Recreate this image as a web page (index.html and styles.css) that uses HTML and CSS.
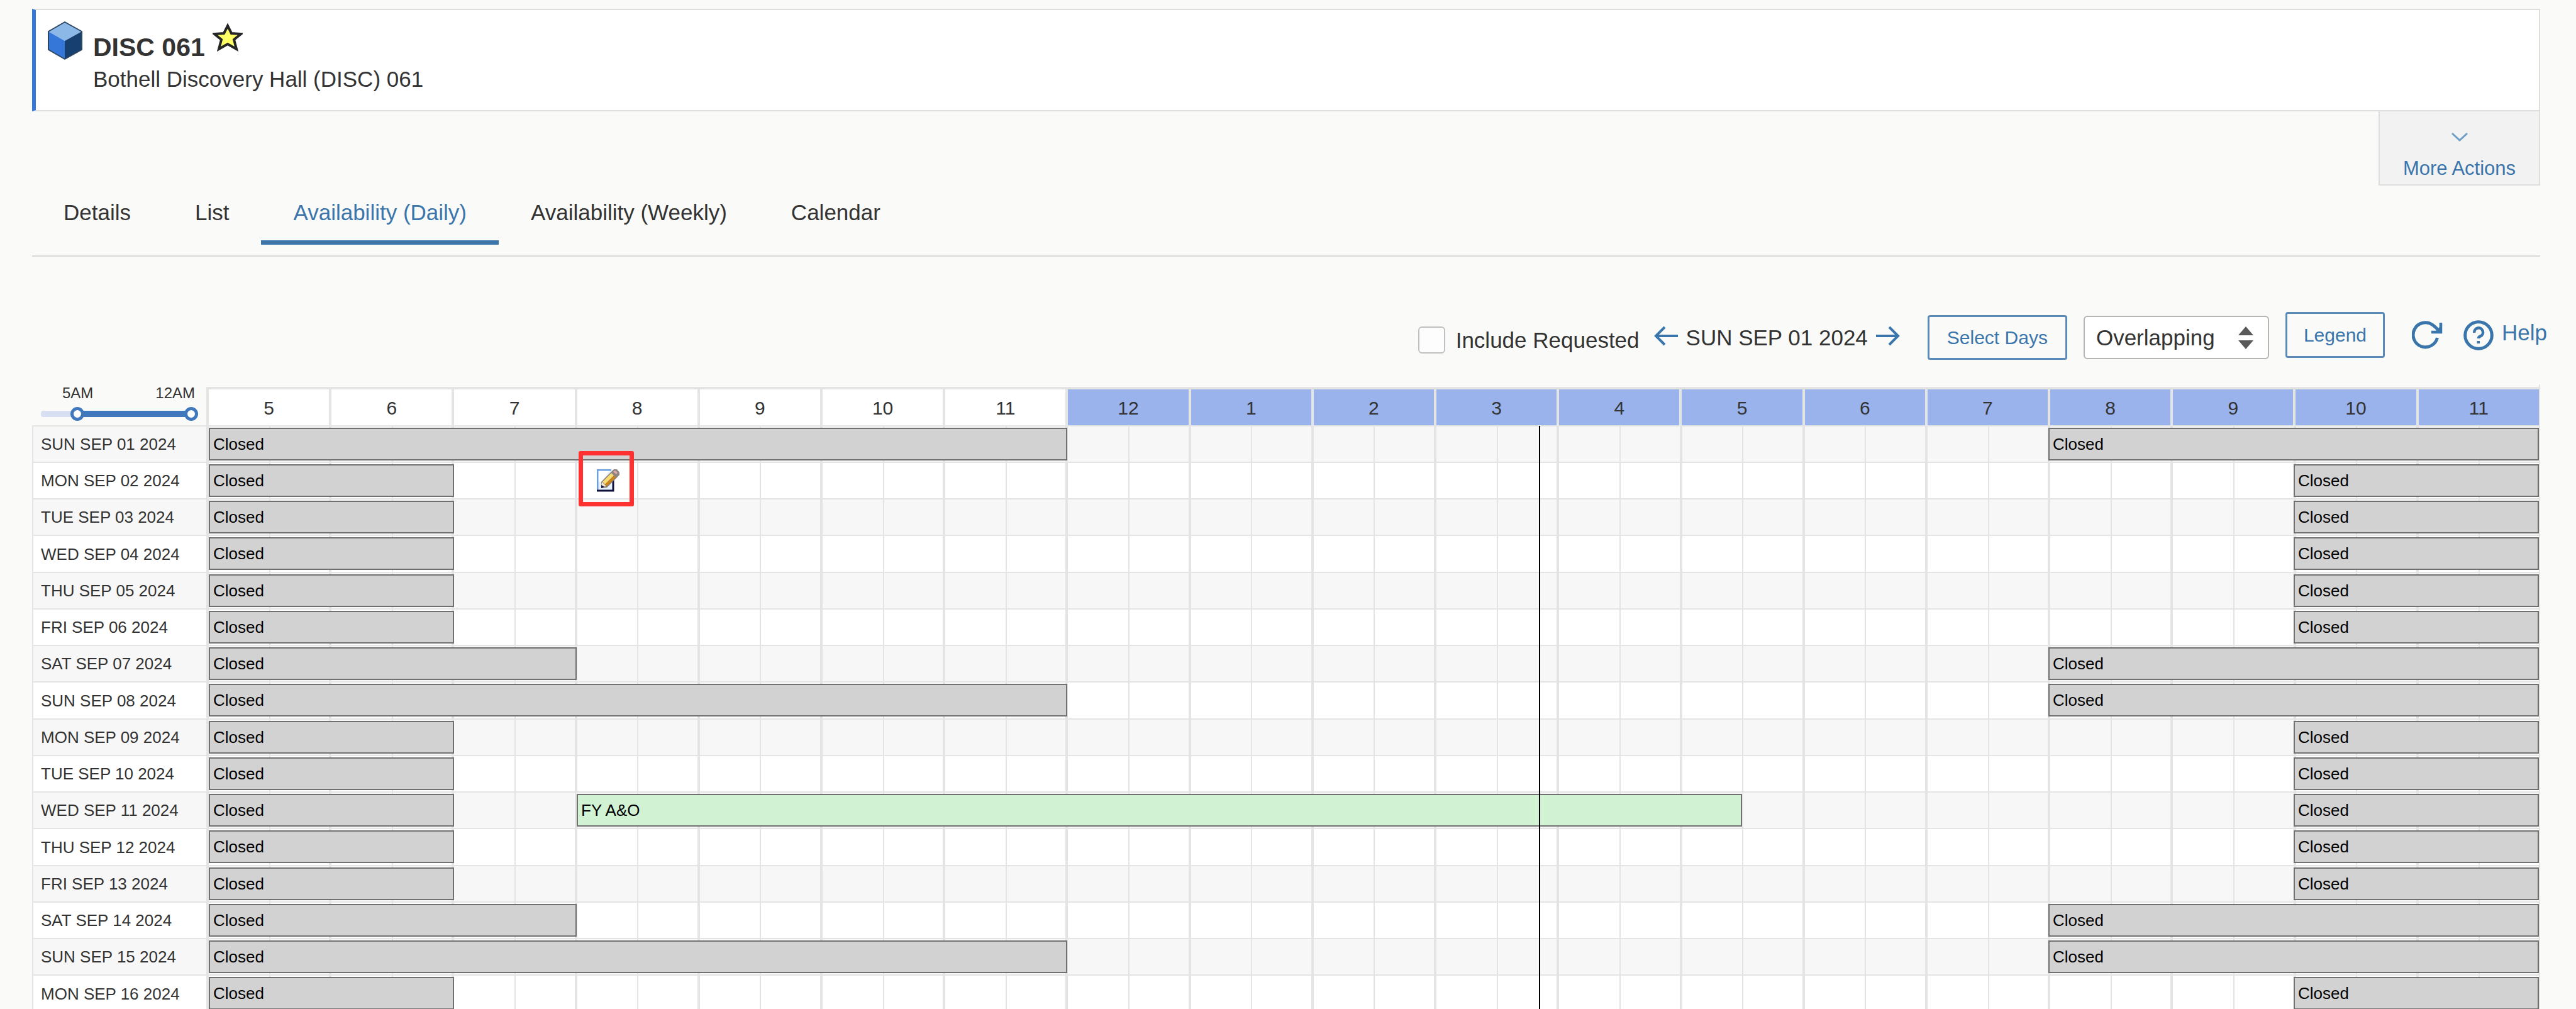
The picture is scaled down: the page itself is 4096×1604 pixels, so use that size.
FILE: index.html
```html
<!DOCTYPE html>
<html lang="en">
<head>
<meta charset="utf-8">
<title>DISC 061 - Availability (Daily)</title>
<link rel="stylesheet" href="styles.css">
</head>
<body>
<main class="page">
  <header class="card">
    <svg class="cube" viewBox="0 0 55 61" aria-hidden="true">
      <path d="M27 1 54 16 27 31 1 16Z" fill="#8cb8e8"/>
      <path d="M1 16 27 31V60L1 45Z" fill="#3577d8"/>
      <path d="M54 16 27 31V60L54 45Z" fill="#173f70"/>
      <path d="M27 1 54 16V45L27 60 1 45V16Z" fill="none" stroke="#2c4560" stroke-width="2" stroke-linejoin="round"/>
    </svg>
    <div class="heading">
      <div class="title-row">
        <h1 class="title">DISC 061</h1>
        <button class="star" type="button" aria-label="Favorite">
          <svg viewBox="0 0 48 46" aria-hidden="true"><path d="M24 5 30 17 45 18 34 27 38 42 24 34 10 42 14 27 3 18 18 17Z" fill="#ffff66" stroke="#262626" stroke-width="4"/></svg>
        </button>
      </div>
      <p class="subtitle">Bothell Discovery Hall (DISC) 061</p>
    </div>
  </header>
  <button class="more" type="button">
    <svg class="chevron" viewBox="0 0 26 14" aria-hidden="true"><path d="M1 1 13 12 25 1" fill="none" stroke="#6f9fc8" stroke-width="3"/></svg>
    <span>More Actions</span>
  </button>
  <nav class="tabs">
    <a class="tab" href="#details">Details</a>
    <a class="tab" href="#list">List</a>
    <a class="tab tab-active" href="#daily">Availability (Daily)</a>
    <a class="tab" href="#weekly">Availability (Weekly)</a>
    <a class="tab" href="#calendar">Calendar</a>
  </nav>
  <div class="toolbar">
    <label class="include"><input class="check" type="checkbox">Include Requested</label>
    <div class="main-tools">
      <div class="date-nav">
        <button class="arrow" type="button" aria-label="Previous"><svg viewBox="0 0 40 32" aria-hidden="true"><path d="M39 16H4M18 2 4 16 18 30" fill="none" stroke="#3a75ab" stroke-width="4"/></svg></button>
        <span class="date">SUN SEP 01 2024</span>
        <button class="arrow" type="button" aria-label="Next"><svg viewBox="0 0 40 32" aria-hidden="true"><path d="M1 16H36M22 2 36 16 22 30" fill="none" stroke="#3a75ab" stroke-width="4"/></svg></button>
      </div>
      <button class="btn" type="button">Select Days</button>
      <div class="picker">
        <select class="select" aria-label="Event display"><option>Overlapping</option></select>
        <svg class="picker-icon" viewBox="0 0 24 36" aria-hidden="true"><path d="M12 0 24 14H0ZM12 36 24 22H0Z" fill="#595959"/></svg>
      </div>
    </div>
    <div class="side-tools">
      <button class="btn" type="button">Legend</button>
      <button class="refresh" type="button" aria-label="Refresh"><svg viewBox="0 0 49 46" aria-hidden="true"><g fill="none" stroke="#3a75ab"><path d="M40.5 27A19.5 19.5 0 1 1 33 6.5Q38 10 44 17" stroke-width="5"/><path d="M46 3V18H31" stroke-width="4.5"/></g><path d="M37 17 45 9V17Z" fill="#3a75ab"/></svg></button>
      <a class="help" href="#help"><svg viewBox="0 0 48 48" aria-hidden="true"><g fill="none" stroke="#3a75ab"><circle cx="24" cy="24" r="21.3" stroke-width="5"/><path d="M17.3 20A6.9 6.9 0 1 1 27 25.5Q24 26.5 24 29" stroke-width="4.5"/></g><path d="M21.5 33H26V37H21.5Z" fill="#3a75ab"/></svg><span>Help</span></a>
    </div>
  </div>
  <div class="schedule">
    <table class="grid">
      <colgroup><col class="day-col"><col span="19"></colgroup>
      <thead>
        <tr>
          <td class="corner">
            <div class="range-labels"><label for="from">5AM</label><label for="to">12AM</label></div>
            <div class="range"><input id="from" class="slider" type="range" min="0" max="24" value="5"><input id="to" class="slider" type="range" min="0" max="24" value="24"></div>
          </td>
          <th class="am">5</th><th class="am">6</th><th class="am">7</th><th class="am">8</th><th class="am">9</th><th class="am">10</th><th class="am">11</th><th>12</th><th>1</th><th>2</th><th>3</th><th>4</th><th>5</th><th>6</th><th>7</th><th>8</th><th>9</th><th>10</th><th>11</th>
        </tr>
      </thead>
      <tbody>
        <tr><th>SUN SEP 01 2024</th><td colspan="19"><div class="track"><div class="event" style="grid-column:1/15">Closed</div><div class="event" style="grid-column:31/39">Closed</div></div></td></tr>
        <tr><th>MON SEP 02 2024</th><td colspan="19"><div class="track"><div class="event" style="grid-column:1/5">Closed</div><div class="event" style="grid-column:35/39">Closed</div>
          <button class="edit" type="button" aria-label="Edit"><svg viewBox="0 0 36 36" aria-hidden="true"><path d="M1 1H27V35H1Z" fill="#e6f0fd"/><path d="M2 2H20L8 20H2Z" fill="#fff"/><path d="M1 34V1H23" fill="none" stroke="#6a9fe3" stroke-width="3"/><path d="M0 34H26V16" fill="none" stroke="#10103c" stroke-width="3"/><path d="M7 30 7 20 23 4 32 13 16 29Z" fill="#857a70"/><path d="M9 20 24 5 28 9 13 24Z" fill="#f7dc74"/><path d="M13 24 28 9 31 12 16 27Z" fill="#cc8418"/><path d="M7 28 8 20 15 27Z" fill="#f3e8d2"/><path d="M7 30V25L12 28Z" fill="#10103c"/><path d="M22 5 27 0H32L36 5V9L31 14Z" fill="#8d8581"/><path d="M26 4 29 2 33 5 31 8Z" fill="#e3a5a8"/></svg></button></div></td></tr>
        <tr><th>TUE SEP 03 2024</th><td colspan="19"><div class="track"><div class="event" style="grid-column:1/5">Closed</div><div class="event" style="grid-column:35/39">Closed</div></div></td></tr>
        <tr><th>WED SEP 04 2024</th><td colspan="19"><div class="track"><div class="event" style="grid-column:1/5">Closed</div><div class="event" style="grid-column:35/39">Closed</div></div></td></tr>
        <tr><th>THU SEP 05 2024</th><td colspan="19"><div class="track"><div class="event" style="grid-column:1/5">Closed</div><div class="event" style="grid-column:35/39">Closed</div></div></td></tr>
        <tr><th>FRI SEP 06 2024</th><td colspan="19"><div class="track"><div class="event" style="grid-column:1/5">Closed</div><div class="event" style="grid-column:35/39">Closed</div></div></td></tr>
        <tr><th>SAT SEP 07 2024</th><td colspan="19"><div class="track"><div class="event" style="grid-column:1/7">Closed</div><div class="event" style="grid-column:31/39">Closed</div></div></td></tr>
        <tr><th>SUN SEP 08 2024</th><td colspan="19"><div class="track"><div class="event" style="grid-column:1/15">Closed</div><div class="event" style="grid-column:31/39">Closed</div></div></td></tr>
        <tr><th>MON SEP 09 2024</th><td colspan="19"><div class="track"><div class="event" style="grid-column:1/5">Closed</div><div class="event" style="grid-column:35/39">Closed</div></div></td></tr>
        <tr><th>TUE SEP 10 2024</th><td colspan="19"><div class="track"><div class="event" style="grid-column:1/5">Closed</div><div class="event" style="grid-column:35/39">Closed</div></div></td></tr>
        <tr><th>WED SEP 11 2024</th><td colspan="19"><div class="track"><div class="event" style="grid-column:1/5">Closed</div><div class="event booked" style="grid-column:7/26">FY A&amp;O</div><div class="event" style="grid-column:35/39">Closed</div></div></td></tr>
        <tr><th>THU SEP 12 2024</th><td colspan="19"><div class="track"><div class="event" style="grid-column:1/5">Closed</div><div class="event" style="grid-column:35/39">Closed</div></div></td></tr>
        <tr><th>FRI SEP 13 2024</th><td colspan="19"><div class="track"><div class="event" style="grid-column:1/5">Closed</div><div class="event" style="grid-column:35/39">Closed</div></div></td></tr>
        <tr><th>SAT SEP 14 2024</th><td colspan="19"><div class="track"><div class="event" style="grid-column:1/7">Closed</div><div class="event" style="grid-column:31/39">Closed</div></div></td></tr>
        <tr><th>SUN SEP 15 2024</th><td colspan="19"><div class="track"><div class="event" style="grid-column:1/15">Closed</div><div class="event" style="grid-column:31/39">Closed</div></div></td></tr>
        <tr><th>MON SEP 16 2024</th><td colspan="19"><div class="track"><div class="event" style="grid-column:1/5">Closed</div><div class="event" style="grid-column:35/39">Closed</div></div></td></tr>
      </tbody>
    </table>
    <div class="timeline"><div class="now" style="left:57.08%"></div></div>
  </div>
</main>
</body>
</html>
```
FILE: styles.css
```css
* { box-sizing: border-box; }
body {
  margin: 0;
  background: #fafaf8;
  color: #333;
  font-family: "Liberation Sans", Arial, sans-serif;
  font-size: 35px;
  line-height: 40px;
}
button, select, input { font: inherit; color: inherit; margin: 0; }
button { padding: 0; border: 0; background: none; cursor: pointer; }
a { color: inherit; text-decoration: none; }
svg { display: block; }
.page {
  height: 100vh;
  overflow: hidden;
  display: flex;
  flex-direction: column;
  padding: 14px 57px 0 51px;
}
.page > * { flex-shrink: 0; }

.card {
  display: flex;
  gap: 17px;
  padding: 18px 19px 26px;
  background: #fff;
  border: 2px solid #dedede;
  border-left: 6px solid #3577d8;
}
.cube { width: 55px; height: 61px; }
.heading { padding-top: 3px; }
.title-row { display: flex; align-items: flex-end; gap: 12px; height: 61px; }
.title { margin: 0; font-size: 41px; line-height: 46px; }
.star { margin-bottom: 16px; }
.star svg { width: 48px; height: 46px; }
.subtitle { margin: 5px 0 0; line-height: 46px; }

.more {
  align-self: flex-end;
  display: flex;
  flex-direction: column;
  align-items: center;
  gap: 25px;
  width: 257px;
  padding: 34px 0 7px;
  background: #f2f2f2;
  border: 2px solid #dedede;
  border-top: 0;
  color: #3a75ab;
  font-size: 31px;
  line-height: 36px;
}
.chevron { width: 26px; height: 14px; }

.tabs {
  display: flex;
  padding-bottom: 17px;
  border-bottom: 2px solid #d8d8d6;
}
.tab { padding: 23px 51px 24px; border-bottom: 7px solid transparent; }
.tab:first-child { padding-left: 50px; }
.tab-active { color: #3a75ab; border-color: #3a75ab; }

.toolbar {
  display: flex;
  justify-content: flex-end;
  align-items: flex-start;
  margin: 88px -11px 39px 0;
  height: 76px;
}
.include { display: flex; align-items: center; gap: 17px; padding-top: 23px; }
.check {
  appearance: none;
  width: 43px;
  height: 43px;
  background: #fdfdfd;
  border: 2px solid #c0c0c0;
  border-radius: 6px;
}
.main-tools { display: flex; align-items: center; gap: 26px; padding-top: 5px; margin-left: 22px; }
.date-nav { display: flex; align-items: center; gap: 12px; margin-right: 17px; }
.arrow { padding-bottom: 5px; }
.arrow svg { width: 40px; height: 32px; }
.btn {
  height: 71px;
  padding: 0 28px;
  border: 3px solid #5a8bb8;
  border-radius: 4px;
  color: #3a75ab;
  font-size: 30px;
}
.picker { position: relative; width: 295px; }
.select {
  appearance: none;
  display: block;
  width: 100%;
  height: 69px;
  padding: 0 18px;
  background: #fff;
  border: 2px solid #b5b5b5;
  border-radius: 6px;
}
.picker-icon {
  position: absolute;
  right: 25px;
  top: 17px;
  width: 24px;
  height: 36px;
  pointer-events: none;
}
.side-tools { display: flex; align-items: center; margin-left: 26px; }
.side-tools .btn { height: 73px; padding: 0 26px; }
.refresh { margin: 0 33px 0 43px; }
.refresh svg { width: 49px; height: 46px; }
.help { display: flex; gap: 13px; color: #3a75ab; }
.help svg { width: 48px; height: 48px; }

/* the last hour's divider is cut off by the schedule's own right edge */
.schedule {
  position: relative;
  overflow-x: clip;
  padding-top: 4px;
  border-right: 2px solid #e4e4e4;
}
.grid { width: calc(100% + 4px); table-layout: fixed; border-collapse: separate; border-spacing: 0; }
.day-col { width: 281px; }
.grid th, .grid td { padding: 0; font-weight: normal; }
.grid thead th {
  height: 63px;
  padding-top: 3px;
  background: #9ab3ec;
  border: solid #e4e4e4;
  border-width: 4px 4px 2px 0;
  font-size: 30px;
}
.grid thead .am { background: #fff; }
.grid .corner {
  padding: 0 13px 0 14px;
  border-right: 4px solid #e4e4e4;
  border-bottom: 2px solid #e4e4e4;
  vertical-align: top;
  font-size: 24px;
  line-height: 20px;
}
.range-labels { display: flex; justify-content: space-between; padding: 0 5px 0 34px; height: 24px; }
.range { position: relative; height: 22px; margin-top: 8px; }
.slider {
  appearance: none;
  position: absolute;
  left: 0;
  top: 0;
  width: 100%;
  height: 22px;
  background: none;
  pointer-events: none;
}
.range::before {
  content: "";
  position: absolute;
  inset: 6px 10px 6px 0;
  border-radius: 4px;
  background: linear-gradient(to right, #d9dff3 24%, #3f78bd 24%);
}
.slider::-webkit-slider-thumb {
  appearance: none;
  width: 22px;
  height: 22px;
  border: 5px solid #3f78bd;
  border-radius: 50%;
  background: #fff;
  pointer-events: auto;
}

tbody tr { height: 58px; background: #fff; }
tbody tr:nth-child(4n) { height: 59px; }
tbody tr:nth-child(odd) { background: #f7f7f7; }
.grid tbody th {
  padding-left: 12px;
  text-align: left;
  border: solid #e4e4e4;
  border-width: 0 4px 2px 2px;
  font-size: 26px;
  line-height: 52px;
  white-space: nowrap;
}
tbody td {
  vertical-align: top;
  border-bottom: 2px solid #e4e4e4;
  background: repeating-linear-gradient(to right,
    transparent 0 calc(100% / 38 - 2px),
    #e4e4e4 calc(100% / 38 - 2px) calc(100% / 38),
    transparent calc(100% / 38) calc(100% / 19 - 4px),
    #e4e4e4 calc(100% / 19 - 4px) calc(100% / 19));
}
.track {
  position: relative;
  display: grid;
  grid-template-columns: repeat(38, minmax(0, 1fr));
  margin-right: 4px;
  padding: 2px 0;
}
.event {
  grid-row: 1;
  height: 52px;
  padding-left: 5px;
  background: #d2d2d2;
  border: 2px solid #707070;
  color: #000;
  font-size: 26px;
  line-height: 48px;
  white-space: nowrap;
}
.booked { background: #d2f2d4; }
.edit {
  position: absolute;
  z-index: 1;
  left: calc(300% / 19 + 3px);
  top: -19px;
  width: 88px;
  height: 88px;
  padding: 0 0 0 6px;
  border: 7px solid #ff3131;
  border-radius: 3px;
}
.edit svg { width: 36px; height: 36px; margin: 6px auto 0; }
.timeline { position: absolute; inset: 66px 0 0 281px; pointer-events: none; }
.now { position: absolute; top: 0; bottom: 0; width: 2px; background: #000; }
```
